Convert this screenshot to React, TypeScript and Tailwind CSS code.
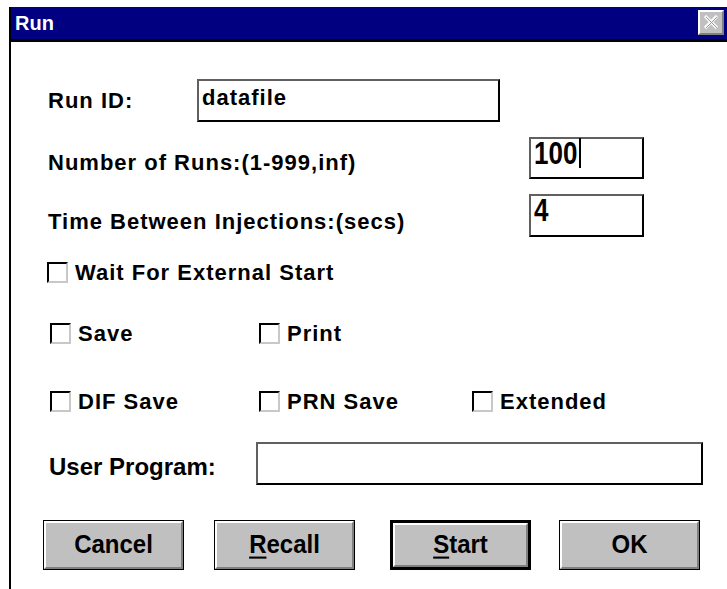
import React from "react";

const labelFont = {
  fontFamily: '"Liberation Sans", Arial, sans-serif',
};

function CheckBox({ label }: { label: string }) {
  return (
    <div className="flex items-center h-[21px]">
      <div className="w-[21px] h-[21px] border-2 border-t-black border-l-black border-b-[#c8c8c8] border-r-[#c8c8c8] bg-white shrink-0" />
      <span
        className="ml-[7px] text-[22px] font-bold tracking-[1px] text-black leading-none whitespace-nowrap"
        style={labelFont}
      >
        {label}
      </span>
    </div>
  );
}

function TextBox({
  w,
  h,
  top,
  children,
}: {
  w: string;
  h: string;
  top?: boolean;
  children?: React.ReactNode;
}) {
  return (
    <div
      className={`${w} ${h} border-2 border-t-[#606060] border-l-[#606060] border-b-black border-r-black bg-white flex ${
        top ? "items-start" : "items-center"
      } pl-[3px] shrink-0`}
    >
      {children}
    </div>
  );
}

function Digits({ children }: { children: React.ReactNode }) {
  return (
    <span
      className="inline-block text-[26px] font-bold leading-none scale-y-[1.22] origin-top -mt-[2px]"
      style={labelFont}
    >
      {children}
    </span>
  );
}

function Button({ children, isDefault }: { children: React.ReactNode; isDefault?: boolean }) {
  return (
    <div className={`w-[141px] h-[50px] bg-black ${isDefault ? "p-[3px]" : "p-[1px]"} shrink-0`}>
      <div className="w-full h-full bg-[#c0c0c0] border-2 border-t-white border-l-white border-b-[#808080] border-r-[#808080] flex items-center justify-center">
        <span
          className="inline-block text-[24px] font-bold text-black leading-none scale-y-[1.05]"
          style={labelFont}
        >
          {children}
        </span>
      </div>
    </div>
  );
}

export default function App() {
  return (
    <div className="w-[727px] h-[589px] bg-white overflow-hidden">
      <div className="h-[7px]" />
      <div className="ml-[9px] border-l-2 border-black h-[582px] flex flex-col">
        {/* caption bar */}
        <div className="h-[35px] bg-[#000080] border-b-[3px] border-black flex items-center justify-between pr-[3px]">
          <span className="ml-[4px] text-white font-bold text-[20px] leading-none" style={labelFont}>
            Run
          </span>
          <div className="w-[26px] h-[25px] bg-[#c0c0c0] border-2 border-t-white border-l-white border-b-[#808080] border-r-[#808080] flex items-center justify-center mb-[2px]">
            <svg width="18" height="18" viewBox="0 0 18 18">
              <path d="M3 3 L15 15 M15 3 L3 15" stroke="#f8f8f8" strokeWidth="3.2" />
              <path d="M4 4 L15 15 M15 4 L4 15" stroke="#9a9a9a" strokeWidth="1" />
            </svg>
          </div>
        </div>

        {/* form body */}
        <div className="flex flex-col pl-[37px]">
          <div className="mt-[37px] flex items-center">
            <span className="w-[149px] text-[22px] font-bold tracking-[1px] leading-none" style={labelFont}>
              Run ID:
            </span>
            <TextBox w="w-[303px]" h="h-[43px]">
              <span className="text-[22px] font-bold tracking-[1px] leading-none -mt-[5px]" style={labelFont}>
                datafile
              </span>
            </TextBox>
          </div>

          <div className="mt-[15px] flex items-center">
            <span
              className="w-[481px] text-[22px] font-bold tracking-[1px] leading-none mt-[9px] whitespace-nowrap"
              style={labelFont}
            >
              Number of Runs:(1-999,inf)
            </span>
            <TextBox w="w-[115px]" h="h-[42px]" top>
              <Digits>100</Digits>
              <span className="w-[2px] h-[30px] bg-black ml-[2px] -mt-[1px]" />
            </TextBox>
          </div>

          <div className="mt-[15px] flex items-center">
            <span
              className="w-[481px] text-[22px] font-bold tracking-[1px] leading-none mt-[12px] whitespace-nowrap"
              style={labelFont}
            >
              Time Between Injections:(secs)
            </span>
            <TextBox w="w-[115px]" h="h-[43px]" top>
              <Digits>4</Digits>
            </TextBox>
          </div>

          <div className="mt-[25px] -ml-[1px]">
            <CheckBox label="Wait For External Start" />
          </div>

          <div className="mt-[40px] ml-[2px] flex">
            <div className="w-[209px]">
              <CheckBox label="Save" />
            </div>
            <CheckBox label="Print" />
          </div>

          <div className="mt-[47px] ml-[2px] flex">
            <div className="w-[209px]">
              <CheckBox label="DIF Save" />
            </div>
            <div className="w-[213px]">
              <CheckBox label="PRN Save" />
            </div>
            <CheckBox label="Extended" />
          </div>

          <div className="mt-[30px] flex items-center">
            <span className="w-[208px] pl-[1px] text-[24px] font-bold leading-none mt-[6px]" style={labelFont}>
              User Program:
            </span>
            <TextBox w="w-[447px]" h="h-[43px]" />
          </div>
        </div>

        <div className="mt-[35px] pl-[32px] flex">
          <Button>Cancel</Button>
          <div className="w-[30px]" />
          <Button>
            <span className="underline underline-offset-[3px] decoration-2">R</span>ecall
          </Button>
          <div className="w-[35px]" />
          <Button isDefault>
            <span className="underline underline-offset-[3px] decoration-2">S</span>tart
          </Button>
          <div className="w-[28px]" />
          <Button>OK</Button>
        </div>
      </div>
    </div>
  );
}
